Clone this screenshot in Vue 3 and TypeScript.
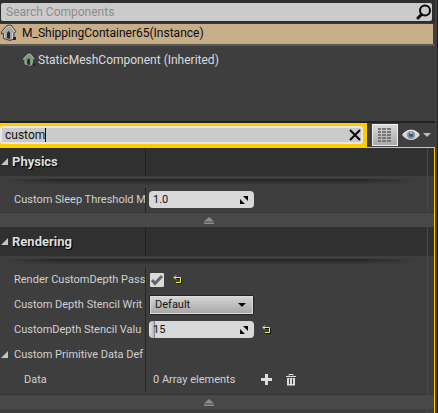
<script setup lang="ts">
import { reactive, ref } from 'vue'

const componentSearch = ref('')
const detailSearch = ref('custom')
const renderPass = ref(true)
const writeMask = ref('Default')
const sleepThreshold = ref('1.0')
const stencilValue = ref('15')
const open = reactive({ physics: true, rendering: true, primitive: true })
</script>

<template>
  <main class="editor">
    <section class="components">
      <div class="search-row">
        <div class="component-search">
          <input v-model="componentSearch" type="text" placeholder="Search Components" aria-label="Search Components" />
          <svg class="magnifier" width="16" height="16" viewBox="0 0 16 16">
            <circle cx="9" cy="6.500" r="5" fill="none" stroke="#080808" stroke-width="2" />
            <path d="M5.500 10.500 2 14" stroke="#080808" stroke-width="3" stroke-linecap="round" />
          </svg>
        </div>
      </div>
      <div class="tree-row selected">
        <svg class="house" width="16" height="17" viewBox="0 0 16 17">
          <path d="M.5 7.500 6 1.500 10 1l5 6.500-2 1.500v6l-4 1.500-6.500-2V9.500L.5 10z" fill="#a5a5a2" stroke="#45423e" />
          <path d="M6 9 7.500 7 9 8.500V15l-3-1z" fill="#2c2d2e" />
          <path d="M2 7.500 7 2.500h2.500L14 8M3.500 9v5M11.500 8.500V15" fill="none" stroke="#d0d0cd" />
          <path d="M12 13h3v3h-3z" fill="#282828" />
        </svg>
        <span>M_ShippingContainer65(Instance)</span>
      </div>
      <div class="tree-row child">
        <svg class="house" width="14" height="15" viewBox="0 0 16 17">
          <path d="M.5 7.500 6 1.500 10 1l5 6.500-2 1.500v6l-4 1.500-6.500-2V9.500L.5 10z" fill="#7d957f" stroke="#2b382e" />
          <path d="M6 9 7.500 7 9 8.500V15l-3-1z" fill="#1d2820" />
          <path d="M2 7.500 7 2.500h2.500L14 8M3.500 9v5M11.500 8.500V15" fill="none" stroke="#a3b8a3" />
          <path d="M12 13h3v3h-3z" fill="#202421" />
        </svg>
        <span>StaticMeshComponent (Inherited)</span>
      </div>
    </section>

    <section class="details">
      <div class="toolbar">
        <div class="filter">
          <div class="filter-box">
            <input v-model="detailSearch" type="text" aria-label="Search Details" />
            <i v-if="detailSearch === 'custom'" class="caret"></i>
            <button class="clear" type="button" aria-label="Clear search" @click="detailSearch = ''">
              <svg width="12" height="12" viewBox="0 0 12 12"><path d="m1 1 10 10M11 1 1 11" stroke="#080808" stroke-width="2" /></svg>
            </button>
          </div>
        </div>
        <div class="tools">
          <button class="matrix" type="button" aria-label="Property matrix">
            <svg width="14" height="14" viewBox="0 0 14 14">
              <path d="M0 1h3M4 1h4M9 1h4M0 4h3M4 4h4M9 4h4M0 7h3M4 7h4M9 7h4M0 10h3M4 10h4M9 10h4M0 13h3M4 13h4M9 13h4" stroke="#777" stroke-width="2" />
            </svg>
          </button>
          <button class="view" type="button" aria-label="View options">
            <svg width="30" height="14" viewBox="0 0 30 14">
              <path d="M0 7Q4 2 9 2t9 5q-4 5-9 5T0 7z" fill="#d8d8d8" />
              <path d="M1 6Q5 2 9 2t8 4" fill="none" stroke="#f0f0f0" />
              <circle cx="9" cy="7" r="4" fill="#7e93a8" />
              <circle cx="9" cy="7" r="2" fill="#40546b" />
              <circle cx="9" cy="5" r="1" fill="#c8d6e3" />
              <path d="M21 5h8l-4 4z" fill="#bcbcbc" />
            </svg>
          </button>
        </div>
      </div>

      <div class="properties">
        <section class="category">
          <h2>
            <button type="button" :aria-expanded="open.physics" @click="open.physics = !open.physics">
              <svg width="8" height="8" viewBox="0 0 8 8"><path d="M7 0v7H0z" fill="#c4c4c4" /></svg>
              <span>Physics</span>
            </button>
          </h2>
          <div class="shade"></div>
          <div v-if="open.physics" class="rows">
            <div class="row">
              <label class="name" for="sleep">Custom Sleep Threshold M</label>
              <div class="value">
                <div class="number">
                  <input id="sleep" v-model="sleepThreshold" type="text" />
                  <svg width="8" height="8" viewBox="0 0 8 8"><path d="M3 0h5v5zM0 3l5 5H0z" fill="#080808" /></svg>
                </div>
              </div>
            </div>
          </div>
          <button class="advanced" type="button" aria-label="Hide advanced physics">
            <svg width="10" height="7" viewBox="0 0 10 7"><path d="M0 4.500 5 0l5 4.500zM0 5.500h10V7H0z" fill="#8c8c8c" /></svg>
          </button>
        </section>

        <section class="category">
          <h2>
            <button type="button" :aria-expanded="open.rendering" @click="open.rendering = !open.rendering">
              <svg width="8" height="8" viewBox="0 0 8 8"><path d="M7 0v7H0z" fill="#c4c4c4" /></svg>
              <span>Rendering</span>
            </button>
          </h2>
          <div class="shade"></div>
          <div v-if="open.rendering" class="rows">
            <div class="row">
              <label class="name" for="pass">Render CustomDepth Pass</label>
              <div class="value">
                <span class="check">
                  <input id="pass" v-model="renderPass" type="checkbox" />
                  <svg v-if="renderPass" width="14" height="14" viewBox="0 0 14 14"><path d="m2 7 3 3.500L12 3" fill="none" stroke="#666" stroke-width="3" /></svg>
                </span>
                <button class="reset" type="button" aria-label="Reset render pass">
                  <svg width="9" height="9" viewBox="0 0 9 9"><path d="M2 3h6v5H3" fill="none" stroke="#111" transform="translate(.5 .5)" /><path d="M1 2.500h6.500v5H3M3 .5 1 2.500l2 2" fill="none" stroke="#f1f44b" /></svg>
                </button>
              </div>
            </div>
            <div class="row">
              <label class="name" for="mask">Custom Depth Stencil Writ</label>
              <div class="value">
                <div class="dropdown">
                  <select id="mask" v-model="writeMask"><option>Default</option></select>
                  <svg width="8" height="4" viewBox="0 0 8 4"><path d="M0 0h8L4 4z" fill="#080808" /></svg>
                </div>
              </div>
            </div>
            <div class="row">
              <label class="name" for="stencil">CustomDepth Stencil Valu</label>
              <div class="value">
                <div class="number slider">
                  <input id="stencil" v-model="stencilValue" type="text" />
                  <svg width="8" height="8" viewBox="0 0 8 8"><path d="M3 0h5v5zM0 3l5 5H0z" fill="#080808" /></svg>
                </div>
                <button class="reset" type="button" aria-label="Reset stencil value">
                  <svg width="9" height="9" viewBox="0 0 9 9"><path d="M2 3h6v5H3" fill="none" stroke="#111" transform="translate(.5 .5)" /><path d="M1 2.500h6.500v5H3M3 .5 1 2.500l2 2" fill="none" stroke="#f1f44b" /></svg>
                </button>
              </div>
            </div>
            <div class="row">
              <button class="name group" type="button" :aria-expanded="open.primitive" @click="open.primitive = !open.primitive">
                <svg width="8" height="8" viewBox="0 0 8 8"><path d="M7 0v7H0z" fill="#c4c4c4" /></svg>
                <span>Custom Primitive Data Def</span>
              </button>
              <div class="value"></div>
            </div>
            <div v-if="open.primitive" class="row">
              <span class="name nested">Data</span>
              <div class="value">
                <span class="count">0 Array elements</span>
                <button class="add" type="button" aria-label="Add element">
                  <svg width="11" height="11" viewBox="0 0 11 11"><path d="M5.500 0v11M0 5.500h11" stroke="#dedede" stroke-width="3" /></svg>
                </button>
                <button class="trash" type="button" aria-label="Remove all elements">
                  <svg width="10" height="12" viewBox="0 0 10 12"><path d="M3 1.500V.5h4v1M0 2.500h10" fill="none" stroke="#dedede" /><path d="M1 4h8v7.500H1z" fill="#dedede" /><path d="M3.500 4.500V10M6.500 4.500V10" stroke="#3e3e3e" /></svg>
                </button>
              </div>
            </div>
          </div>
          <button class="advanced" type="button" aria-label="Hide advanced rendering">
            <svg width="10" height="7" viewBox="0 0 10 7"><path d="M0 4.500 5 0l5 4.500zM0 5.500h10V7H0z" fill="#8c8c8c" /></svg>
          </button>
        </section>
      </div>
    </section>
  </main>
</template>

<style>
body { background: #3e3e3e; }
</style>

<style scoped>
* { box-sizing: border-box; }
.editor {
  min-height: 100vh;
  display: flex;
  flex-direction: column;
  padding-right: 2px;
  border-right: 1px solid #222;
  background: #3e3e3e;
  color: #d0d0d0;
  font: 11px/16px Roboto, "Liberation Sans", sans-serif;
}
input, select, button { margin: 0; padding: 0; border: 0; font: inherit; color: inherit; }
button { display: flex; align-items: center; background: none; }
input, select { outline: 0; min-width: 0; }
svg { display: block; flex: none; }

.components { min-height: 123px; border-bottom: 2px solid #222; }
.search-row { padding: 3px 3px 2px 1px; background: #2e2e2e; border-bottom: 1px solid #3a3a3a; }
.component-search {
  display: flex;
  align-items: center;
  height: 18px;
  padding: 0 0 0 5px;
  border-radius: 2px;
  background: #cbcbcb;
}
.component-search input { flex: 1; background: none; font-size: 12px; color: #111; }
.component-search input::placeholder { color: #8c8c8c; opacity: 1; }
.tree-row { display: flex; align-items: center; font-size: 12px; }
.selected { height: 20px; margin-right: 2px; padding: 0 0 3px 1px; gap: 5px; background: #c8ad89; color: #0c0c0c; }
.child { height: 29px; padding-left: 22px; gap: 2px; border-top: 2px solid #585858; color: #dcdcdc; }

.details { flex: 1; display: flex; flex-direction: column; }
.toolbar { display: flex; height: 25px; }
.filter { flex: 1; padding: 3px 4px 4px 0; background: #fc0; }
.filter-box {
  position: relative;
  display: flex;
  align-items: center;
  height: 18px;
  padding: 0 0 0 3px;
  border: 2px solid #e6e6e6;
  border-radius: 3px;
  background: #cbcbcb;
}
.filter-box input { flex: 1; background: none; color: #111; font-size: 12px; }
.caret { position: absolute; left: 43px; top: 0; width: 1px; height: 14px; background: #000; }
.tools { display: flex; align-items: center; gap: 4px; padding: 0 3px 1px 5px; border-bottom: 1px solid #fc0; }
.matrix {
  width: 26px;
  height: 22px;
  justify-content: center;
  border: 1px solid #eee;
  background: linear-gradient(#d8d8d8, #a9a9a9);
}
.properties { position: relative; flex: 1; border-right: 1px solid #fc0; background: #3e3e3e; }
.properties::after { content: ""; position: absolute; top: 0; bottom: 0; right: 6px; width: 1px; background: #484848; }

h2 { display: flex; height: 28px; margin: 0; background: #303030; font-size: 13px; }
.category + .category h2 { height: 29px; }
h2 button { width: 146px; padding-left: 1px; gap: 3px; border-right: 1px solid #202020; color: #dedede; font-weight: 700; text-shadow: 1px 1px 1px #000; }
.shade {
  height: 11px;
  margin-right: 15px;
  border-top: 3px solid #3e3e3e;
  background:
    linear-gradient(90deg, #3e3e3e, transparent 15%, transparent 85%, #3e3e3e) top / 100% 6px no-repeat,
    linear-gradient(#202020, #3e3e3e) top / 100% 6px no-repeat;
}
.row { display: flex; height: 25px; }
.name {
  flex: none;
  width: 146px;
  padding-left: 14px;
  overflow: hidden;
  border-right: 1px solid #252525;
  line-height: 25px;
  white-space: nowrap;
}
.group { gap: 5px; padding-left: 1px; text-align: left; }
.nested { padding-left: 24px; }
.value { flex: 1; display: flex; align-items: center; padding-left: 3px; }
.number { position: relative; display: flex; align-items: center; width: 105px; height: 17px; padding: 0 6px 0 4px; border-radius: 4px; background: #d8d8d8; color: #111; }
.number input { flex: 1; background: none; }
.slider { background: linear-gradient(90deg, #e4e4e4, #b8b8b8 5px, #888 5px, #888 6px, #d8d8d8 6px); }
.reset { margin-left: 8px; }
.check { position: relative; width: 14px; height: 14px; margin: 0 1px; }
.check input { display: block; width: 14px; height: 14px; appearance: none; border-radius: 1px; background: #dadada; }
.check svg { position: absolute; inset: 0; pointer-events: none; }
.dropdown { position: relative; width: 105px; height: 20px; border: 1px solid #222; border-radius: 2px; background: linear-gradient(#d6d6d6, #a5a5a5); color: #111; }
.dropdown select { display: block; width: 100%; height: 18px; padding-left: 4px; appearance: none; border: 1px solid #ddd; background: none; }
.dropdown svg { position: absolute; right: 7px; top: 7px; pointer-events: none; }
.count { padding-left: 4px; }
.add { margin-left: 26px; }
.trash { margin-left: 14px; }
.advanced { width: 100%; height: 15px; padding-right: 16px; justify-content: center; border-top: 1px solid #343434; background: #484848; }
.category + .category .advanced { margin-top: 2px; }
</style>
